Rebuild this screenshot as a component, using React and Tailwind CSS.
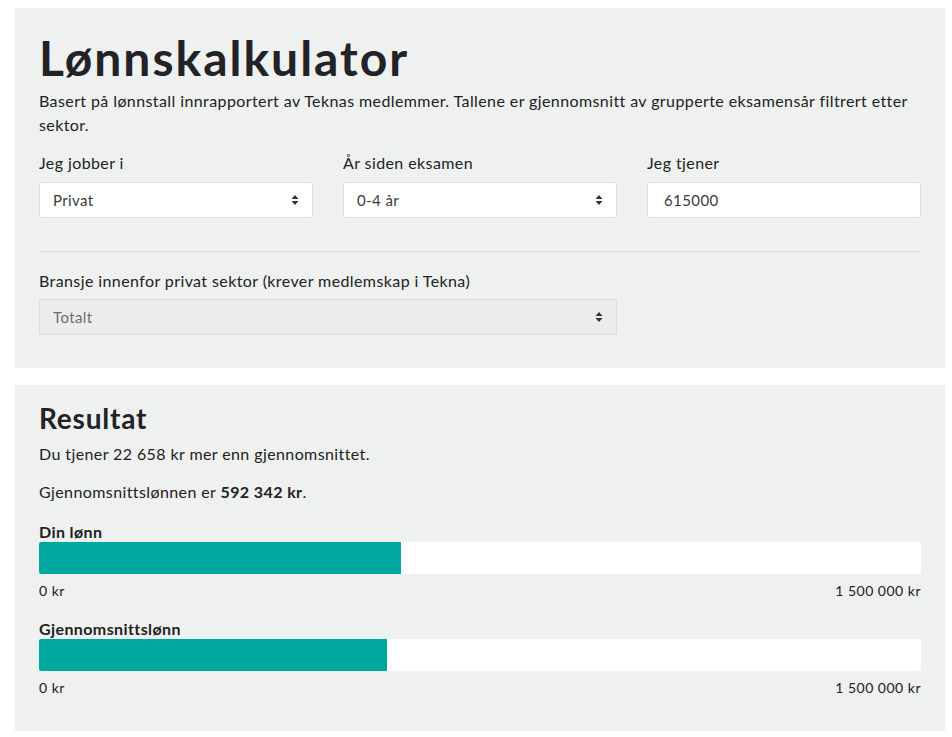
import React, { useState } from "react";

const MAX_SALARY = 1500000;
const AVERAGE = 592342;

function formatKr(value) {
  return String(Math.round(value)).replace(/\B(?=(\d{3})+(?!\d))/g, " ");
}

function SortArrows() {
  return (
    <svg width="8" height="11" viewBox="0 0 8 11" className="pointer-events-none absolute right-[14px] top-1/2 -translate-y-1/2">
      <path d="M4 0.5 L7.5 4.5 H0.5 Z" fill="#333" />
      <path d="M4 10.5 L7.5 6.5 H0.5 Z" fill="#333" />
    </svg>
  );
}

function Select({ value, options, disabled, onChange }) {
  return (
    <div className="relative">
      <select
        value={value}
        disabled={disabled}
        onChange={(event) => onChange?.(event.target.value)}
        className={
          "h-9 w-full appearance-none rounded-[2px] border border-[#dcdcdc] pl-[13px] pr-8 text-[15px] tracking-[0.4px] outline-none " +
          (disabled ? "bg-[#ececec] text-[#6c6c6c]" : "bg-white text-[#3a3a3a]")
        }
      >
        {options.map((option) => (
          <option key={option} value={option}>
            {option}
          </option>
        ))}
      </select>
      <SortArrows />
    </div>
  );
}

function Bar({ label, value }) {
  const pct = Math.min(100, (value / MAX_SALARY) * 100);
  return (
    <div>
      <div className="text-[16px] font-bold leading-[18px] tracking-[0.4px] text-[#222]">{label}</div>
      <div className="mt-px h-8 w-full overflow-hidden rounded-[2px] bg-white">
        <div className="h-full bg-[#00a79f]" style={{ width: `${pct}%` }} />
      </div>
      <div className="mt-[7px] flex justify-between text-[14px] leading-[20px] tracking-[0.5px] text-[#222]">
        <span>0 kr</span>
        <span>1 500 000 kr</span>
      </div>
    </div>
  );
}

export default function App() {
  const [sector, setSector] = useState("Privat");
  const [years, setYears] = useState("0-4 år");
  const [salary, setSalary] = useState("615000");
  const mine = Number(salary || 0);
  const diff = mine - AVERAGE;

  return (
    <div className="min-h-[737px] bg-white px-[15px] pt-2 pb-2 text-[#222]" style={{ fontFamily: "Lato, 'Noto Sans', sans-serif" }}>
      <div className="w-[930px] bg-[#eff0f0] px-6 pt-[22px] pb-[33px]">
        <h1 className="text-[48px] font-bold leading-[56px] tracking-[2px] text-[#212327]">Lønnskalkulator</h1>
        <p className="mt-[3px] text-[16px] leading-6 tracking-[0.4px] text-[#222]">
          Basert på lønnstall innrapportert av Teknas medlemmer. Tallene er gjennomsnitt av grupperte eksamensår filtrert etter sektor.
        </p>
        <div className="mt-[14px] grid grid-cols-3 gap-x-[30px] text-[16px] tracking-[0.4px]">
          <label className="block">
            <span className="block leading-6">Jeg jobber i</span>
            <div className="mt-[7px]">
              <Select value={sector} options={["Privat", "Offentlig"]} onChange={setSector} />
            </div>
          </label>
          <label className="block">
            <span className="block leading-6">År siden eksamen</span>
            <div className="mt-[7px]">
              <Select value={years} options={["0-4 år", "5-9 år", "10-14 år", "15-19 år", "20+ år"]} onChange={setYears} />
            </div>
          </label>
          <label className="block">
            <span className="block leading-6">Jeg tjener</span>
            <input
              value={salary}
              onChange={(event) => setSalary(event.target.value.replace(/\D/g, ""))}
              className="mt-[7px] h-9 w-full rounded-[2px] border border-[#dcdcdc] bg-white px-4 text-[15px] tracking-[0.4px] text-[#3a3a3a] outline-none"
            />
          </label>
        </div>
        <div className="mt-[33px] h-px bg-[#dcdddd]" />
        <div className="mt-[17px] grid grid-cols-3 gap-x-[30px] text-[16px] tracking-[0.4px]">
          <label className="col-span-2 block">
            <span className="block leading-6">Bransje innenfor privat sektor (krever medlemskap i Tekna)</span>
            <div className="mt-[6px]">
              <Select value="Totalt" options={["Totalt"]} disabled />
            </div>
          </label>
        </div>
      </div>

      <div className="mt-[17px] w-[930px] bg-[#eff0f0] px-6 pt-4 pb-[33px]">
        <h2 className="text-[28px] font-bold leading-[34px] tracking-[0.8px] text-[#212327]">Resultat</h2>
        <p className="mt-[7px] text-[16px] leading-6 tracking-[0.4px]">
          Du tjener {formatKr(Math.abs(diff))} kr {diff >= 0 ? "mer" : "mindre"} enn gjennomsnittet.
        </p>
        <p className="mt-[14px] text-[16px] leading-6 tracking-[0.4px]">
          Gjennomsnittslønnen er <strong className="font-bold">{formatKr(AVERAGE)} kr</strong>.
        </p>
        <div className="mt-[19px] flex flex-col gap-[19px]">
          <Bar label="Din lønn" value={mine} />
          <Bar label="Gjennomsnittslønn" value={AVERAGE} />
        </div>
      </div>
    </div>
  );
}
